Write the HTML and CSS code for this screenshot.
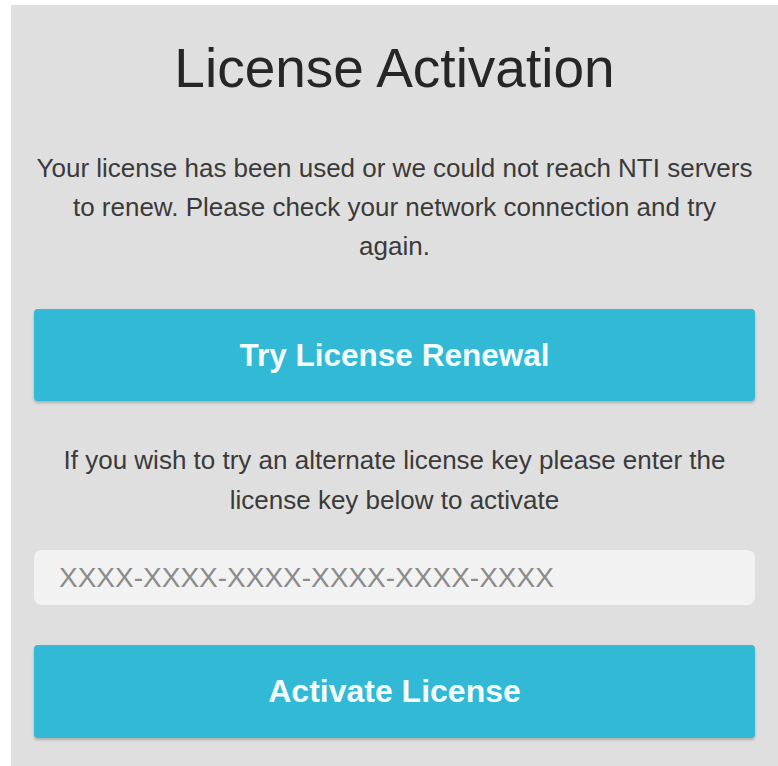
FILE: index.html
```html
<!DOCTYPE html>
<html lang="en">
<head>
<meta charset="utf-8">
<title>License Activation</title>
<link rel="stylesheet" href="styles.css">
</head>
<body>
  <main class="panel">
    <h1 class="title">License Activation</h1>
    <p class="message">Your license has been used or we could not reach NTI servers to renew. Please check your network connection and try again.</p>
    <button class="action" type="button">Try License Renewal</button>
    <p class="message message-alt">If you wish to try an alternate license key please enter the license key below to activate</p>
    <input class="key-input" type="text" placeholder="XXXX-XXXX-XXXX-XXXX-XXXX-XXXX">
    <button class="action action-activate" type="button">Activate License</button>
  </main>
</body>
</html>
```
FILE: styles.css
```css
html, body {
  margin: 0;
  background: #ffffff;
}

body {
  padding: 5px 0 0 11px;
  font-family: "Liberation Sans", Arial, sans-serif;
}

.panel {
  background: #e0dfdf;
  padding: 31px 23px 40px 23px;
  min-height: 761px;
  box-sizing: border-box;
  display: flex;
  flex-direction: column;
}

.title {
  margin: 0;
  font-size: 55px;
  line-height: 64px;
  font-weight: 400;
  color: #262626;
  text-align: center;
}

.message {
  margin: 49px 0 0;
  font-size: 26px;
  line-height: 39px;
  color: #3a3a3a;
  text-align: center;
}

.message-alt {
  margin-top: 39px;
  line-height: 40px;
}

.action {
  margin-top: 43px;
  height: 92px;
  border: none;
  border-radius: 4px;
  background: #31b9d6;
  color: #f4fdff;
  font-family: "Liberation Sans", Arial, sans-serif;
  font-size: 31.5px;
  font-weight: 700;
  box-shadow: 0 2px 3px rgba(0, 0, 0, 0.22);
  cursor: pointer;
}

.action-activate {
  margin-top: 40px;
  height: 93px;
  font-size: 32px;
}

.key-input {
  margin-top: 30px;
  height: 55px;
  box-sizing: border-box;
  border: none;
  border-radius: 8px;
  background: #f2f2f2;
  padding: 0 25px;
  font-family: "Liberation Sans", Arial, sans-serif;
  font-size: 28px;
  color: #333333;
  outline: none;
}

.key-input::placeholder {
  color: #8c8c8c;
}
```
